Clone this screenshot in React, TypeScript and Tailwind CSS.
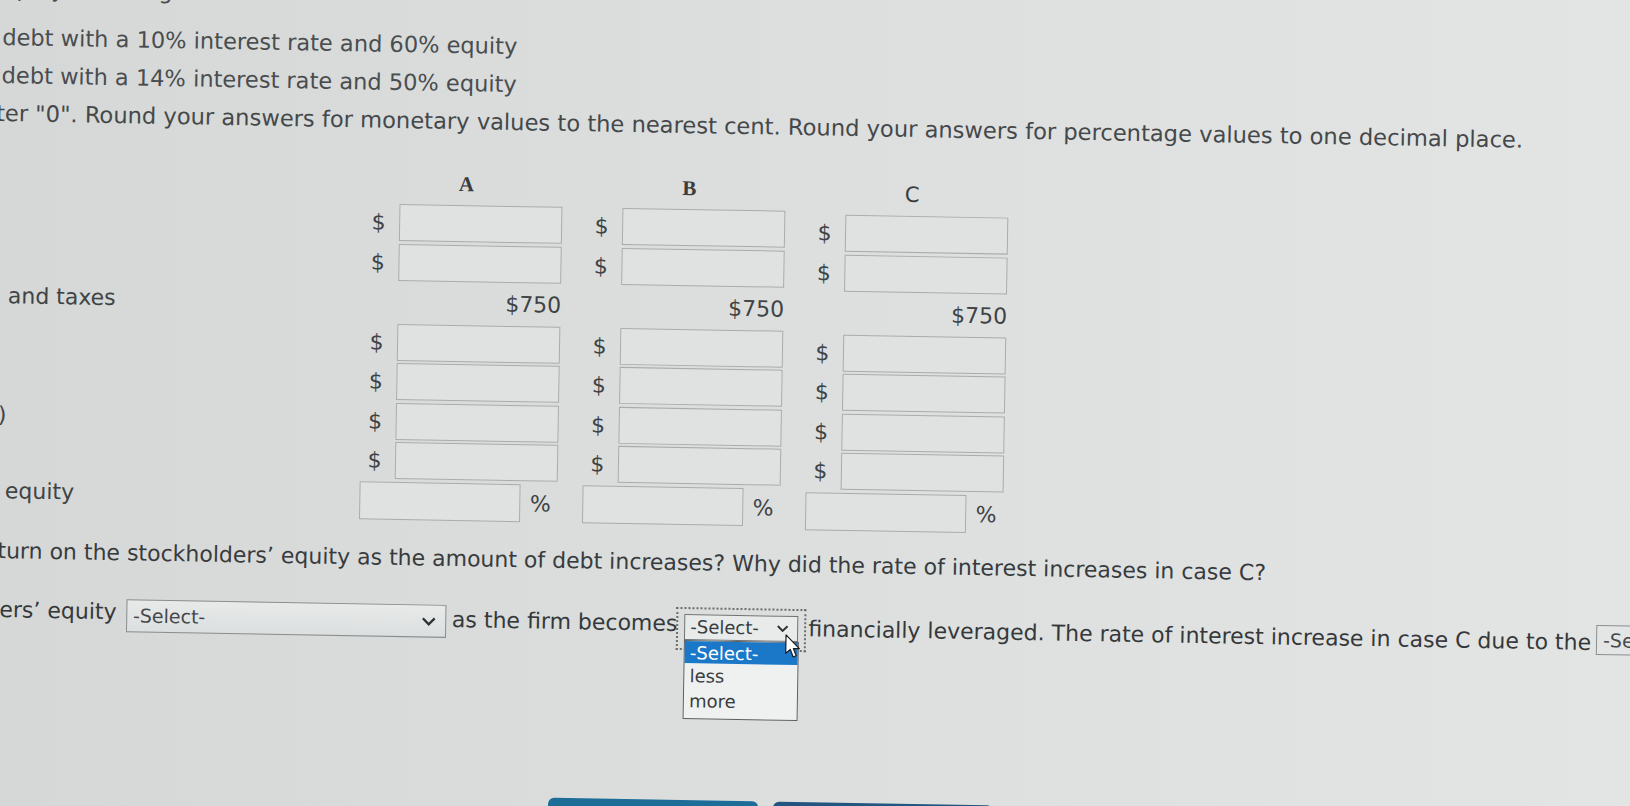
import React from 'react';

const box = 'block border border-[#a9acac] bg-[#e0e2e2] outline-none';

function MoneyRow() {
  return (
    <div className="flex h-[37px] items-center">
      <span className="w-[36px] pr-[13px] text-right">$</span>
      <input type="text" aria-label="amount" className={`${box} h-[37px] w-[163px]`} />
    </div>
  );
}

interface CaseColumnProps {
  letter: string;
  headerClass: string;
  className?: string;
}

function CaseColumn({ letter, headerClass, className = '' }: CaseColumnProps) {
  return (
    <div className={`flex w-[200px] shrink-0 flex-col ${className}`}>
      <div className={`h-[24px] pl-[6px] text-center leading-[24px] ${headerClass}`}>{letter}</div>
      <div className="mt-[9px] flex flex-col gap-[2.5px]">
        <MoneyRow />
        <MoneyRow />
      </div>
      <div className="flex h-[43px] items-center justify-end">$750</div>
      <div className="flex flex-col gap-[2.5px]">
        <MoneyRow />
        <MoneyRow />
        <MoneyRow />
        <MoneyRow />
      </div>
      <div className="mt-[3px] flex h-[38px] items-center">
        <input type="text" aria-label="percent" className={`${box} ml-[1px] h-[38px] w-[161px]`} />
        <span className="ml-[10px]">%</span>
      </div>
    </div>
  );
}

function LabelColumn() {
  return (
    <div className="flex w-[366.5px] shrink-0 flex-col">
      <div className="h-[24px]" />
      <div className="mt-[9px] h-[76.5px]" />
      <div className="flex h-[43px] items-center pl-[13px]">and taxes</div>
      <div className="flex flex-col gap-[2.5px]">
        <div className="h-[37px]" />
        <div className="h-[37px]" />
        <div className="flex h-[37px] items-center pl-[5px]">)</div>
        <div className="h-[37px]" />
      </div>
      <div className="mt-[3px] flex h-[38px] items-center pb-[8px] pl-[13.5px]">equity</div>
    </div>
  );
}

function Chevron({ className = '' }: { className?: string }) {
  return (
    <svg viewBox="0 0 14 9" className={className} fill="none" stroke="#2f3234" strokeWidth="2.2">
      <polyline points="1.5,1.5 7,7 12.5,1.5" />
    </svg>
  );
}

function Cursor() {
  return (
    <svg viewBox="0 0 16 26" className="absolute left-[107px] top-[23px] z-20 h-[26px] w-[16px]">
      <path
        d="M1 1 L1 19.5 L5.5 15.5 L8.5 23 L11.5 21.8 L8.6 14.6 L14.5 14.6 Z"
        fill="#ffffff"
        stroke="#1b1b1b"
        strokeWidth="1.2"
        strokeLinejoin="round"
      />
    </svg>
  );
}

export default function App() {
  return (
    <div className="relative h-[806px] w-[1630px] overflow-hidden bg-linear-to-r from-[#d5d8d7] via-[#dcdfde] to-[#e3e5e4] font-['DejaVu_Sans',sans-serif] text-[22px] text-[#404345]">
      <div className="flex w-[1800px] origin-top-left rotate-[1deg] flex-col whitespace-nowrap">
        {/* question text, cut at the left edge by the photo */}
        <div className="-mt-[23px] -ml-[5px] h-[24px] leading-[24px] text-[#4a4d4f]">equity financing</div>
        <div className="mt-[24px] h-[24px] pl-[3px] text-[22.5px] leading-[24px] text-[#4a4d4f]">
          debt with a 10% interest rate and 60% equity
        </div>
        <div className="mt-[14px] h-[24px] pl-[3px] text-[22.5px] leading-[24px] text-[#4a4d4f]">
          debt with a 14% interest rate and 50% equity
        </div>
        <div className="mt-[13.5px] -ml-[2px] h-[24px] text-[22.6px] leading-[24px] text-[#45484a]">
          ter "0". Round your answers for monetary values to the nearest cent. Round your answers for percentage values to
          one decimal place.
        </div>

        {/* cases table */}
        <div className="mt-[39.5px] flex">
          <LabelColumn />
          <CaseColumn letter="A" headerClass="font-['Liberation_Serif',serif] text-[21px] font-bold text-[#3a3c3e]" />
          <CaseColumn
            letter="B"
            headerClass="font-['Liberation_Serif',serif] text-[21px] font-bold text-[#3a3c3e]"
            className="ml-[23px]"
          />
          <CaseColumn letter="C" headerClass="text-[21px] text-[#3a3c3e]" className="ml-[23px] mt-[3px]" />
        </div>

        <div className="mt-[23px] h-[24px] pl-[7px] leading-[24px] text-[#383b3d]">
          turn on the stockholders’ equity as the amount of debt increases? Why did the rate of interest increases in case C?
        </div>

        {/* answer sentence with selects */}
        <div className="mt-[33.5px] flex h-[34px] items-start pl-[10px] text-[#35383a]">
          <span className="mt-[1.5px] h-[24px] shrink-0 leading-[24px]">ers’ equity</span>
          <div className="ml-[9.5px] mt-[0.5px] flex h-[33px] w-[320px] shrink-0 items-center justify-between border border-[#8b8e8f] bg-linear-to-b from-[#e8eaea] to-[#dcdfdf] pl-[6px] pr-[9px] text-[19px] text-[#45484a]">
            <span>-Select-</span>
            <Chevron className="h-[10px] w-[15px]" />
          </div>
          <span className="ml-[6px] mt-[3.5px] h-[24px] shrink-0 leading-[24px]">as the firm becomes</span>
          <div className="relative -ml-[1px] -mt-[1.5px] h-[43px] w-[130px] shrink-0 border-2 border-dotted border-[#6b6e70] px-[6px] pt-[4.5px]">
            <div className="flex h-[26px] w-[114px] items-center justify-between border border-[#6f7274] bg-[#e9ebeb] pl-[5px] pr-[8px] text-[18px] leading-none text-[#3a3d3f]">
              <span>-Select-</span>
              <Chevron className="h-[8px] w-[13px]" />
            </div>
            <div className="absolute left-[6px] top-[31px] z-10 flex w-[115px] flex-col border border-[#5d6062] bg-[#eff1f1] pb-[5px] text-[18px] text-[#3a3d3f]">
              <div className="flex h-[22px] items-center bg-[#1b78c8] pl-[5px] text-white">-Select-</div>
              <div className="flex h-[25px] items-center pl-[5px]">less</div>
              <div className="flex h-[25px] items-center pl-[5px]">more</div>
            </div>
            <Cursor />
          </div>
          <span className="ml-[2px] mt-[6.5px] h-[24px] shrink-0 leading-[24px]">
            financially leveraged. The rate of interest increase in case C due to the
          </span>
          <div className="ml-[5px] mt-[0.5px] flex h-[30px] w-[160px] shrink-0 items-center border border-[#8b8e8f] bg-[#e4e6e6] pl-[6px] text-[19px] text-[#45484a]">
            -Select-
          </div>
        </div>

        {/* action buttons, only their top edge is in the photo */}
        <div className="mt-[157.5px] flex pl-[562px]">
          <div className="h-[40px] w-[210px] shrink-0 rounded-t-[6px] bg-[#1c6e99]" />
          <div className="ml-[15px] h-[40px] w-[220px] shrink-0 rounded-t-[6px] bg-[#22557f]" />
        </div>
      </div>
    </div>
  );
}
